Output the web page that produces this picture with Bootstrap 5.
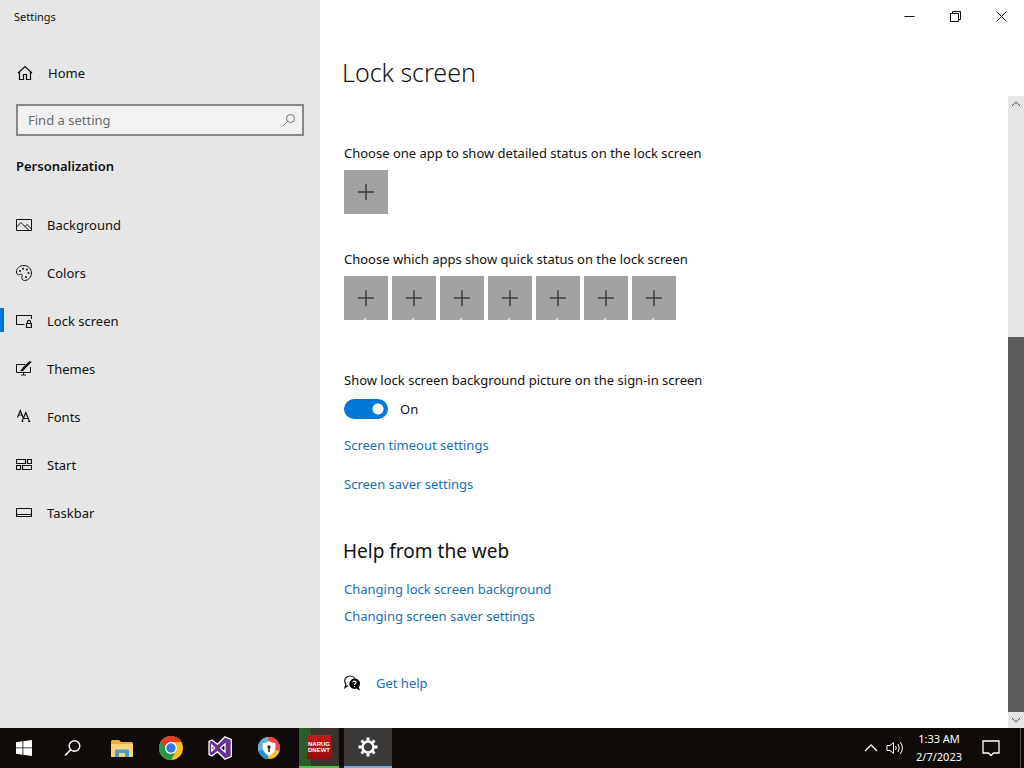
<!DOCTYPE html>
<html lang="en">
<head>
<meta charset="utf-8">
<meta name="viewport" content="width=device-width, initial-scale=1">
<title>Settings - Lock screen</title>
<link rel="stylesheet" href="https://cdn.jsdelivr.net/npm/bootstrap@5.3.0/dist/css/bootstrap.min.css">
<style>
body { font-family: "Noto Sans", "Open Sans", sans-serif; font-size: 13px; line-height: 20px; color: #111; background: #fff; }
svg { display: block; flex: none; }
.ln { fill: none; stroke: currentColor; }
.plain { border: 0; background: none; padding: 0; color: inherit; display: flex; align-items: center; justify-content: center; }
a { color: #1a6fb5; text-decoration: none; }
a:hover { color: #666; }
.side { flex: 0 0 320px; background: #e6e6e6; }
.apptitle { font-size: 11px; padding: 7px 14px 5px; line-height: 20px; }
.side a { color: #111; height: 48px; padding: 0 16px; gap: 15px; }
.side .active { position: relative; }
.side .active::before { content: ""; position: absolute; left: 0; top: 11px; width: 4px; height: 24px; background: #0078d7; }
.nav-home { margin-top: 17px; }
.finder { border: 2px solid #898989; background: #f2f2f2; height: 32px; padding: 0 6px 0 10px; margin: 7px 16px 0; color: #777; }
.finder input { border: 0; background: none; outline: 0; min-width: 0; padding: 0; color: #111; }
.finder input::placeholder { color: #6b6b6b; opacity: 1; }
.side h2 { font-size: 13px; line-height: 20px; font-weight: 600; margin: 20px 16px 25px; }
.winbtn { width: 46px; height: 32px; }
h1 { font-size: 25px; line-height: 36px; font-weight: 300; margin: 22px 22px 6px; }
.pane { padding: 47px 24px 24px; }
.pane p { margin: 0 0 7px; }
.addtile { width: 44px; height: 44px; background: linear-gradient(#ddd, #ddd) 20px 42px / 2px 2px no-repeat #a2a2a2; color: #3c3c3c; }
.solo { background: #a2a2a2; }
.row-label { padding-top: 35px; }
.pane .signin-label { padding-top: 50px; }
.form-switch .form-check-input { width: 44px; height: 20px; margin: 0 12px 0 0; float: none; border: 0; background: radial-gradient(circle at 34px 10px, #fff 5px, transparent 6px) #0078d7; }
.form-switch { min-height: 24px; }
.screen-links { padding-top: 14px; gap: 19px; }
.pane h2 { font-size: 19px; line-height: 28px; font-weight: 400; margin: 43px 0 14px -1px; }
.web-links { gap: 7px; }
.help-row { padding-top: 47px; }
.scroller { flex: 0 0 16px; background: #e6e6e6; color: #555; }
.scroller button { height: 16px; }
.track { flex: 225 1 0; }
.thumb { flex: 375 1 0; background: #5d5d5d; }
.taskbar { height: 40px; background: #0e0b08; color: #fff; }
.apps { gap: 1px; }
.taskbtn { width: 48px; height: 40px; }
.runner { width: 40px; margin: 0 4px 0 5px; background: linear-gradient(90deg, #2c5c29 12px, #38332f 12px); border-bottom: 2px solid #3fca3f; }
.current { background: #3d3b3a; border-bottom: 2px solid #76abdf; }
.news { width: 24px; height: 24px; background: linear-gradient(#c41a1c, #9b080c); font: 700 6px/6px "Liberation Sans", sans-serif; padding-top: 6px; }
.tray { width: 24px; }
.clock { font-size: 11px; line-height: 18px; width: 64px; padding-top: 2px; }
.notes { width: 40px; }
.desk { width: 4px; margin-left: 9px; border-left: 1px solid #555; }
</style>
</head>
<body class="min-vh-100 d-flex flex-column">
<div class="d-flex flex-grow-1">
  <aside class="side d-flex flex-column">
    <div class="apptitle">Settings</div>
    <a href="#" class="d-flex align-items-center nav-home">
      <svg class="ln" width="17" height="16"><path d="M2 8 9 1.500 16 8M3.500 7V14.500H7.500V9.500H10.500V14.500H14.500V7" stroke-width="1.200"/></svg>Home</a>
    <div class="finder d-flex align-items-center">
      <input class="flex-grow-1" type="text" placeholder="Find a setting" aria-label="Find a setting">
      <svg class="ln" width="14" height="14"><circle cx="8.500" cy="5.500" r="4"/><path d="M5.500 8.500 1 13"/></svg>
    </div>
    <h2>Personalization</h2>
    <nav class="nav flex-column">
      <a href="#" class="d-flex align-items-center"><svg class="ln" width="16" height="16"><path d="M.5 2.500H15.500V13.500H.5ZM.5 10 5 5.500 12.500 13M9 9.500 11 7.500 15.500 12"/></svg>Background</a>
      <a href="#" class="d-flex align-items-center"><svg class="ln" width="16" height="16"><path d="M8 .5C3.500 .5 .5 3.300 .5 7 .5 9 2 10.500 3.500 9.500 5 8.500 6.800 9.500 6 11.300 5.300 13.500 6.500 15.500 8.500 15.500 12.500 15.500 15.500 12 15.500 8S12.500 .5 8 .5Z"/><g fill="currentColor" stroke="none"><circle cx="4" cy="6" r="1"/><circle cx="7" cy="3.700" r="1"/><circle cx="10.800" cy="4.500" r="1"/><circle cx="12.500" cy="8" r="1"/><circle cx="10" cy="12" r="1"/></g></svg>Colors</a>
      <a href="#" class="active d-flex align-items-center" aria-current="page"><svg class="ln" width="16" height="16"><path d="M8.500 11.500H.5V2.500H15.500V6M10.500 10.500H15.500V14.500H10.500ZM11.500 10.500V8.500C11.500 7 14.500 7 14.500 8.500V10.500" stroke-width="1.200"/></svg>Lock screen</a>
      <a href="#" class="d-flex align-items-center"><svg class="ln" width="16" height="16"><path d="M9 3.500H.5V11.500H14.500V6M7.500 11.500V14M5 14H10"/><path d="M14.800 1.200 8 8 7 7 13.500 1Z" stroke-width="1.200"/><path d="M7 7 8.500 8.500C7.500 10.500 6 10.500 4 10 5.500 9 5 8 7 7Z" fill="currentColor" stroke="none"/></svg>Themes</a>
      <a href="#" class="d-flex align-items-center"><svg class="ln" width="16" height="16"><path d="M1.500 8.500 4.300 1.500 7 8.500M2.500 6H6M6 12.500 9.800 3.500 13.500 12.500M7.500 9.500H12M5.500 12.500H7.500M12 12.500H14.500" stroke-width="1.200"/></svg>Fonts</a>
      <a href="#" class="d-flex align-items-center"><svg class="ln" width="16" height="16"><path d="M.5 2.500H9.500V6.500H.5ZM11.500 2.500H15.500V6.500H11.500ZM.5 8.500H4.500V12.500H.5ZM6.500 8.500H15.500V12.500H6.500Z" stroke-width="1.200"/></svg>Start</a>
      <a href="#" class="d-flex align-items-center"><svg class="ln" width="16" height="16"><path d="M.5 3.500H15.500V11.500H.5ZM.5 9.500H15.500" stroke-width="1.200"/></svg>Taskbar</a>
    </nav>
  </aside>
  <main class="flex-grow-1 d-flex flex-column">
    <div class="d-flex justify-content-end">
      <button class="plain winbtn" aria-label="Minimize"><svg class="ln" width="11" height="11"><path d="M.5 5.500H10.500"/></svg></button>
      <button class="plain winbtn" aria-label="Restore"><svg class="ln" width="11" height="11"><path d="M.5 2.500H8.500V10.500H.5ZM2.500 2.500V.5H10.500V8.500H8.500"/></svg></button>
      <button class="plain winbtn" aria-label="Close"><svg class="ln" width="11" height="11"><path d="M.5 .5 10.500 10.500M10.500 .5 .5 10.500"/></svg></button>
    </div>
    <h1>Lock screen</h1>
    <div class="d-flex flex-grow-1">
      <div class="pane flex-grow-1">
        <p>Choose one app to show detailed status on the lock screen</p>
        <button class="plain addtile solo" aria-label="Add app"><svg class="ln" width="16" height="16"><path d="M8 0V16M0 8H16" stroke-width="1.500"/></svg></button>
        <p class="row-label">Choose which apps show quick status on the lock screen</p>
        <div class="d-flex gap-1">
          <button class="plain addtile" aria-label="Add app 1"><svg class="ln" width="16" height="16"><path d="M8 0V16M0 8H16" stroke-width="1.500"/></svg></button>
          <button class="plain addtile" aria-label="Add app 2"><svg class="ln" width="16" height="16"><path d="M8 0V16M0 8H16" stroke-width="1.500"/></svg></button>
          <button class="plain addtile" aria-label="Add app 3"><svg class="ln" width="16" height="16"><path d="M8 0V16M0 8H16" stroke-width="1.500"/></svg></button>
          <button class="plain addtile" aria-label="Add app 4"><svg class="ln" width="16" height="16"><path d="M8 0V16M0 8H16" stroke-width="1.500"/></svg></button>
          <button class="plain addtile" aria-label="Add app 5"><svg class="ln" width="16" height="16"><path d="M8 0V16M0 8H16" stroke-width="1.500"/></svg></button>
          <button class="plain addtile" aria-label="Add app 6"><svg class="ln" width="16" height="16"><path d="M8 0V16M0 8H16" stroke-width="1.500"/></svg></button>
          <button class="plain addtile" aria-label="Add app 7"><svg class="ln" width="16" height="16"><path d="M8 0V16M0 8H16" stroke-width="1.500"/></svg></button>
        </div>
        <p class="signin-label" id="signin">Show lock screen background picture on the sign-in screen</p>
        <div class="form-check form-switch d-flex align-items-center p-0 m-0">
          <input class="form-check-input" type="checkbox" role="switch" id="sw" checked aria-describedby="signin"><label for="sw">On</label>
        </div>
        <div class="d-flex flex-column align-items-start screen-links">
          <a href="#">Screen timeout settings</a>
          <a href="#">Screen saver settings</a>
        </div>
        <h2>Help from the web</h2>
        <div class="d-flex flex-column align-items-start web-links">
          <a href="#">Changing lock screen background</a>
          <a href="#">Changing screen saver settings</a>
        </div>
        <div class="d-flex align-items-center gap-3 help-row">
          <svg width="16" height="16"><path class="ln" d="M4 10.500 1 12.500 2 9.500C-1 5 2 1 6 1 8.500 1 10 2 11 3.500" stroke-width="1.200"/><path d="M10.500 3.500A5.200 5.200 0 1 0 12.500 13.500L16 15.500 14.800 12A5.200 5.200 0 0 0 10.500 3.500Z"/><path d="M8.800 7.300C9 5.500 12.200 5.800 12 7.500 11.900 8.500 10.500 8.700 10.500 10M10.500 11V12.200" fill="none" stroke="#fff" stroke-width="1.200"/></svg>
          <a href="#">Get help</a>
        </div>
      </div>
      <div class="scroller d-flex flex-column">
        <button class="plain" aria-label="Scroll up"><svg class="ln" width="10" height="6"><path d="M1 5 5 1 9 5"/></svg></button>
        <div class="track"></div><div class="thumb"></div>
        <button class="plain" aria-label="Scroll down"><svg class="ln" width="10" height="6"><path d="M1 1 5 5 9 1"/></svg></button>
      </div>
    </div>
  </main>
</div>
<footer class="taskbar d-flex justify-content-between">
  <div class="d-flex apps">
    <button class="plain taskbtn" aria-label="Start"><svg width="16" height="16" fill="#fff"><path d="M0 2.200 6.500 1.300V7.500H0ZM7.300 1.200 16 0V7.500H7.300ZM0 8.300H6.500V14.700L0 13.800ZM7.300 8.300H16V16L7.300 14.800Z"/></svg></button>
    <button class="plain taskbtn" aria-label="Search"><svg class="ln" width="18" height="18"><circle cx="10.500" cy="7" r="5.300" stroke-width="1.400"/><path d="M6.500 11 1 16.500" stroke-width="1.600"/></svg></button>
    <button class="plain taskbtn" aria-label="File Explorer"><svg width="22" height="19"><path d="M0 2 1 1H8L10 3H21L22 4V17H0Z" fill="#e5ad3c"/><path d="M0 5H22V18H0Z" fill="#f8d673"/><path d="M4 18V12Q4 10.500 5.500 10.500H16.500Q18 10.500 18 12V18H14V14H8V18Z" fill="#4b9bd0"/></svg></button>
    <button class="plain taskbtn" aria-label="Chrome"><svg width="24" height="24" viewBox="-12 -12 24 24"><circle r="12" fill="#fbc116"/><path d="M0 0-10.400-6A12 12 0 0 1 10.400-6H0Z" fill="#e33b2e"/><path d="M0 0-10.400-6A12 12 0 0 0 0 12L5 3Z" fill="#279847"/><path d="M-10.400-6 0-6V0H-5Z" fill="#e33b2e"/><circle r="6" fill="#fff"/><circle r="4.700" fill="#3478e5"/></svg></button>
    <button class="plain taskbtn" aria-label="Visual Studio"><svg width="24" height="24"><path fill-rule="evenodd" d="M17 0.800 23.300 3.500V20.500L17 23.200 9.500 15.700 4 20 1 18.500V5.500L4 4 9.500 8.300ZM17 8 12.500 12 17 16ZM3.800 9V15L6.700 12Z" fill="#68308f" stroke="#fff" stroke-width="1.300"/></svg></button>
    <button class="plain taskbtn" aria-label="Secure browser"><svg width="22" height="22" viewBox="-11 -11 22 22"><circle r="11" fill="#f3c32f"/><path d="M0 0-10.500 3A11 11 0 0 1-1-11Z" fill="#59b4e8"/><path d="M0 0-1-11A11 11 0 0 1 10.500 3Z" fill="#e9454b"/><path d="M0 0-10.500 3A11 11 0 0 0-1 11Z" fill="#2390d7"/><path d="M-6.500-5Q-2-5 0-7 2-5 6.500-5V0Q6 4.500 0 8-6 4.500-6.500 0Z" fill="#fff"/><circle cy="-1" r="1.800" fill="#333"/><path d="M-.8 0H.8V4H-.8Z" fill="#333"/></svg></button>
    <button class="plain taskbtn runner" aria-label="News"><span class="news d-block">NARUG<br>DNEWT</span></button>
    <button class="plain taskbtn current" aria-label="Settings"><svg width="20" height="20" viewBox="-10 -10 20 20"><circle r="5.500" fill="none" stroke="#fff" stroke-width="2.500"/><path d="M0-9.500V-6M0 6V9.500M-9.500 0H-6M6 0H9.500M-6.500-6.500-4.500-4.500M6.500 6.500 4.500 4.500M-6.500 6.500-4.500 4.500M6.500-6.500 4.500-4.500" stroke="#fff" stroke-width="3"/></svg></button>
  </div>
  <div class="d-flex align-items-stretch">
    <button class="plain tray" aria-label="Hidden icons"><svg class="ln" width="14" height="8"><path d="M1 7 7 1 13 7" stroke-width="1.300"/></svg></button>
    <button class="plain tray" aria-label="Volume"><svg class="ln" width="18" height="16"><path d="M1 5.500H4L7.500 2.500V13.500L4 10.500H1Z"/><path d="M9.500 6Q11 8 9.500 10M12 4Q14.500 8 12 12M14.300 2Q18.500 8 14.300 14"/></svg></button>
    <div class="clock text-center">1:33 AM<br>2/7/2023</div>
    <button class="plain notes" aria-label="Notifications"><svg class="ln" width="18" height="18"><path d="M1 2H17V14H11.500L9 16.500 6.500 14H1Z" stroke-width="1.300"/></svg></button>
    <div class="desk"></div>
  </div>
</footer>
<script src="https://cdn.jsdelivr.net/npm/bootstrap@5.3.0/dist/js/bootstrap.bundle.min.js"></script>
</body>
</html>
